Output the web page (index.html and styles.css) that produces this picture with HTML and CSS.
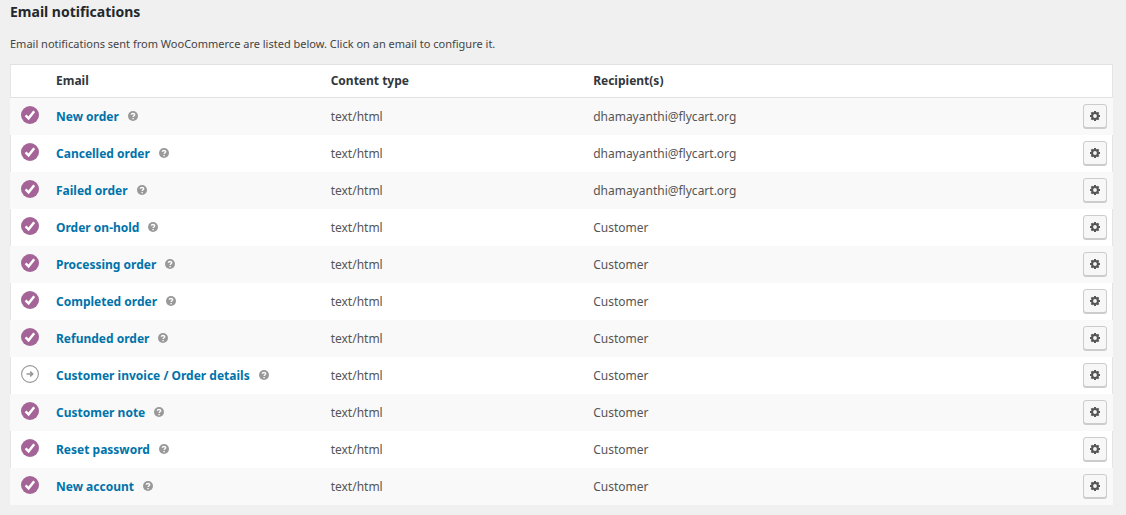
FILE: index.html
```
<!DOCTYPE html>
<html lang="en">
<head>
<meta charset="utf-8">
<meta name="viewport" content="width=device-width, initial-scale=1">
<title>Email notifications</title>
<link rel="stylesheet" href="styles.css">
</head>
<body>
<svg class="sprite" aria-hidden="true">
  <symbol id="check" viewBox="0 0 18 18"><circle cx="9" cy="9" r="9" fill="#a46497"/><path d="M4.6 9.3l3 3 5.6-7" fill="none" stroke="#fff" stroke-width="2.5"/></symbol>
  <symbol id="manual" viewBox="0 0 18 18"><circle cx="9" cy="9" r="8.4" fill="none" stroke="#999" stroke-width="1.1"/><path d="M5.5 9h5.5M9.2 6.6L11.6 9l-2.4 2.4" fill="none" stroke="#999" stroke-width="1.7"/></symbol>
  <symbol id="help" viewBox="0 0 10 10"><circle cx="5" cy="5" r="5" fill="#999"/><path d="M3.3 3.8C3.4 2 6.7 2 6.7 3.8 6.7 4.8 5.1 4.8 5.1 6.1" fill="none" stroke="#fff" stroke-width="1.4"/><path d="M4.4 6.9h1.4v1.3H4.4z" fill="#fff"/></symbol>
  <symbol id="gear" viewBox="0 0 10 10"><circle cx="5" cy="5" r="2.9" fill="none" stroke="#555" stroke-width="2"/><path d="M5 0v1.8M5 8.2V10M0 5h1.8M8.2 5H10M1.4 1.4l1.3 1.3M7.3 7.3l1.3 1.3M8.6 1.4L7.3 2.7M2.7 7.3L1.4 8.6" fill="none" stroke="#555" stroke-width="2"/></symbol>
</svg>
<main class="settings">
  <h2 class="title">Email notifications</h2>
  <p class="description">Email notifications sent from WooCommerce are listed below. Click on an email to configure it.</p>
  <table class="emails">
    <colgroup><col class="col-status"><col class="col-name"><col class="col-type"><col class="col-recipient"><col class="col-action"></colgroup>
    <thead>
      <tr><th></th><th scope="col">Email</th><th scope="col">Content type</th><th scope="col">Recipient(s)</th><th></th></tr>
    </thead>
    <tbody>
      <tr><td><svg class="status" role="img" aria-label="Enabled"><use href="#check"/></svg></td><td><a class="name" href="#new-order">New order</a><svg class="help"><use href="#help"/></svg></td><td>text/html</td><td>dhamayanthi@flycart.org</td><td><button class="manage" type="button" aria-label="Manage"><svg class="gear"><use href="#gear"/></svg></button></td></tr>
      <tr><td><svg class="status" role="img" aria-label="Enabled"><use href="#check"/></svg></td><td><a class="name" href="#cancelled-order">Cancelled order</a><svg class="help"><use href="#help"/></svg></td><td>text/html</td><td>dhamayanthi@flycart.org</td><td><button class="manage" type="button" aria-label="Manage"><svg class="gear"><use href="#gear"/></svg></button></td></tr>
      <tr><td><svg class="status" role="img" aria-label="Enabled"><use href="#check"/></svg></td><td><a class="name" href="#failed-order">Failed order</a><svg class="help"><use href="#help"/></svg></td><td>text/html</td><td>dhamayanthi@flycart.org</td><td><button class="manage" type="button" aria-label="Manage"><svg class="gear"><use href="#gear"/></svg></button></td></tr>
      <tr><td><svg class="status" role="img" aria-label="Enabled"><use href="#check"/></svg></td><td><a class="name" href="#order-on-hold">Order on-hold</a><svg class="help"><use href="#help"/></svg></td><td>text/html</td><td>Customer</td><td><button class="manage" type="button" aria-label="Manage"><svg class="gear"><use href="#gear"/></svg></button></td></tr>
      <tr><td><svg class="status" role="img" aria-label="Enabled"><use href="#check"/></svg></td><td><a class="name" href="#processing-order">Processing order</a><svg class="help"><use href="#help"/></svg></td><td>text/html</td><td>Customer</td><td><button class="manage" type="button" aria-label="Manage"><svg class="gear"><use href="#gear"/></svg></button></td></tr>
      <tr><td><svg class="status" role="img" aria-label="Enabled"><use href="#check"/></svg></td><td><a class="name" href="#completed-order">Completed order</a><svg class="help"><use href="#help"/></svg></td><td>text/html</td><td>Customer</td><td><button class="manage" type="button" aria-label="Manage"><svg class="gear"><use href="#gear"/></svg></button></td></tr>
      <tr><td><svg class="status" role="img" aria-label="Enabled"><use href="#check"/></svg></td><td><a class="name" href="#refunded-order">Refunded order</a><svg class="help"><use href="#help"/></svg></td><td>text/html</td><td>Customer</td><td><button class="manage" type="button" aria-label="Manage"><svg class="gear"><use href="#gear"/></svg></button></td></tr>
      <tr><td><svg class="status" role="img" aria-label="Manually sent"><use href="#manual"/></svg></td><td><a class="name" href="#customer-invoice">Customer invoice / Order details</a><svg class="help"><use href="#help"/></svg></td><td>text/html</td><td>Customer</td><td><button class="manage" type="button" aria-label="Manage"><svg class="gear"><use href="#gear"/></svg></button></td></tr>
      <tr><td><svg class="status" role="img" aria-label="Enabled"><use href="#check"/></svg></td><td><a class="name" href="#customer-note">Customer note</a><svg class="help"><use href="#help"/></svg></td><td>text/html</td><td>Customer</td><td><button class="manage" type="button" aria-label="Manage"><svg class="gear"><use href="#gear"/></svg></button></td></tr>
      <tr><td><svg class="status" role="img" aria-label="Enabled"><use href="#check"/></svg></td><td><a class="name" href="#reset-password">Reset password</a><svg class="help"><use href="#help"/></svg></td><td>text/html</td><td>Customer</td><td><button class="manage" type="button" aria-label="Manage"><svg class="gear"><use href="#gear"/></svg></button></td></tr>
      <tr><td><svg class="status" role="img" aria-label="Enabled"><use href="#check"/></svg></td><td><a class="name" href="#new-account">New account</a><svg class="help"><use href="#help"/></svg></td><td>text/html</td><td>Customer</td><td><button class="manage" type="button" aria-label="Manage"><svg class="gear"><use href="#gear"/></svg></button></td></tr>
    </tbody>
  </table>
</main>
</body>
</html>
```

FILE: styles.css
```
* { box-sizing: border-box; }
body {
  margin: 0;
  background: #f0f0f0;
  color: #555;
  font-family: "Noto Sans", "Open Sans", sans-serif;
  font-size: 12px;
  line-height: 20px;
}
.sprite { position: absolute; width: 0; height: 0; }
.settings { padding: 2px 13px 10px 10px; }
.title { margin: 0 0 12px; font-size: 14px; line-height: 20px; color: #23282d; }
.description { margin: 0 0 10px; font-size: 11px; line-height: 20px; color: #444; }
.emails {
  width: 100%;
  table-layout: fixed;
  border-collapse: separate;
  border-spacing: 0;
  background: #fff;
}
.col-status { width: 46px; }
.col-name { width: 24.9%; }
.col-type { width: 23.8%; }
.col-action { width: 48px; }
th, td { padding: 0; text-align: left; }
th {
  height: 34px;
  border-top: 1px solid #e1e1e1;
  border-bottom: 1px solid #e1e1e1;
  color: #32373c;
  font-weight: 700;
}
td { height: 37px; }
tr > :first-child { border-left: 1px solid #e5e5e5; padding-left: 10px; }
tr > :last-child { border-right: 1px solid #e5e5e5; padding-right: 5px; text-align: right; }
tbody tr > :last-child { padding-bottom: 2px; }
tbody tr:nth-child(odd) { background: #f9f9f9; }
tbody tr:nth-child(odd) > td { border-color: #f9f9f9; }
.name { color: #0073aa; font-weight: 700; text-decoration: none; vertical-align: middle; }
.status { display: block; width: 18px; height: 18px; margin-bottom: 4px; }
.help { width: 10px; height: 10px; margin: 0 0 2px 9px; vertical-align: middle; }
.manage {
  display: inline-flex;
  align-items: center;
  justify-content: center;
  width: 24px;
  height: 24px;
  padding: 0;
  border: 1px solid #ccc;
  border-radius: 3px;
  background: #f7f7f7;
  box-shadow: 0 1px 0 #ccc;
  vertical-align: middle;
}
.gear { width: 10px; height: 10px; }
```
